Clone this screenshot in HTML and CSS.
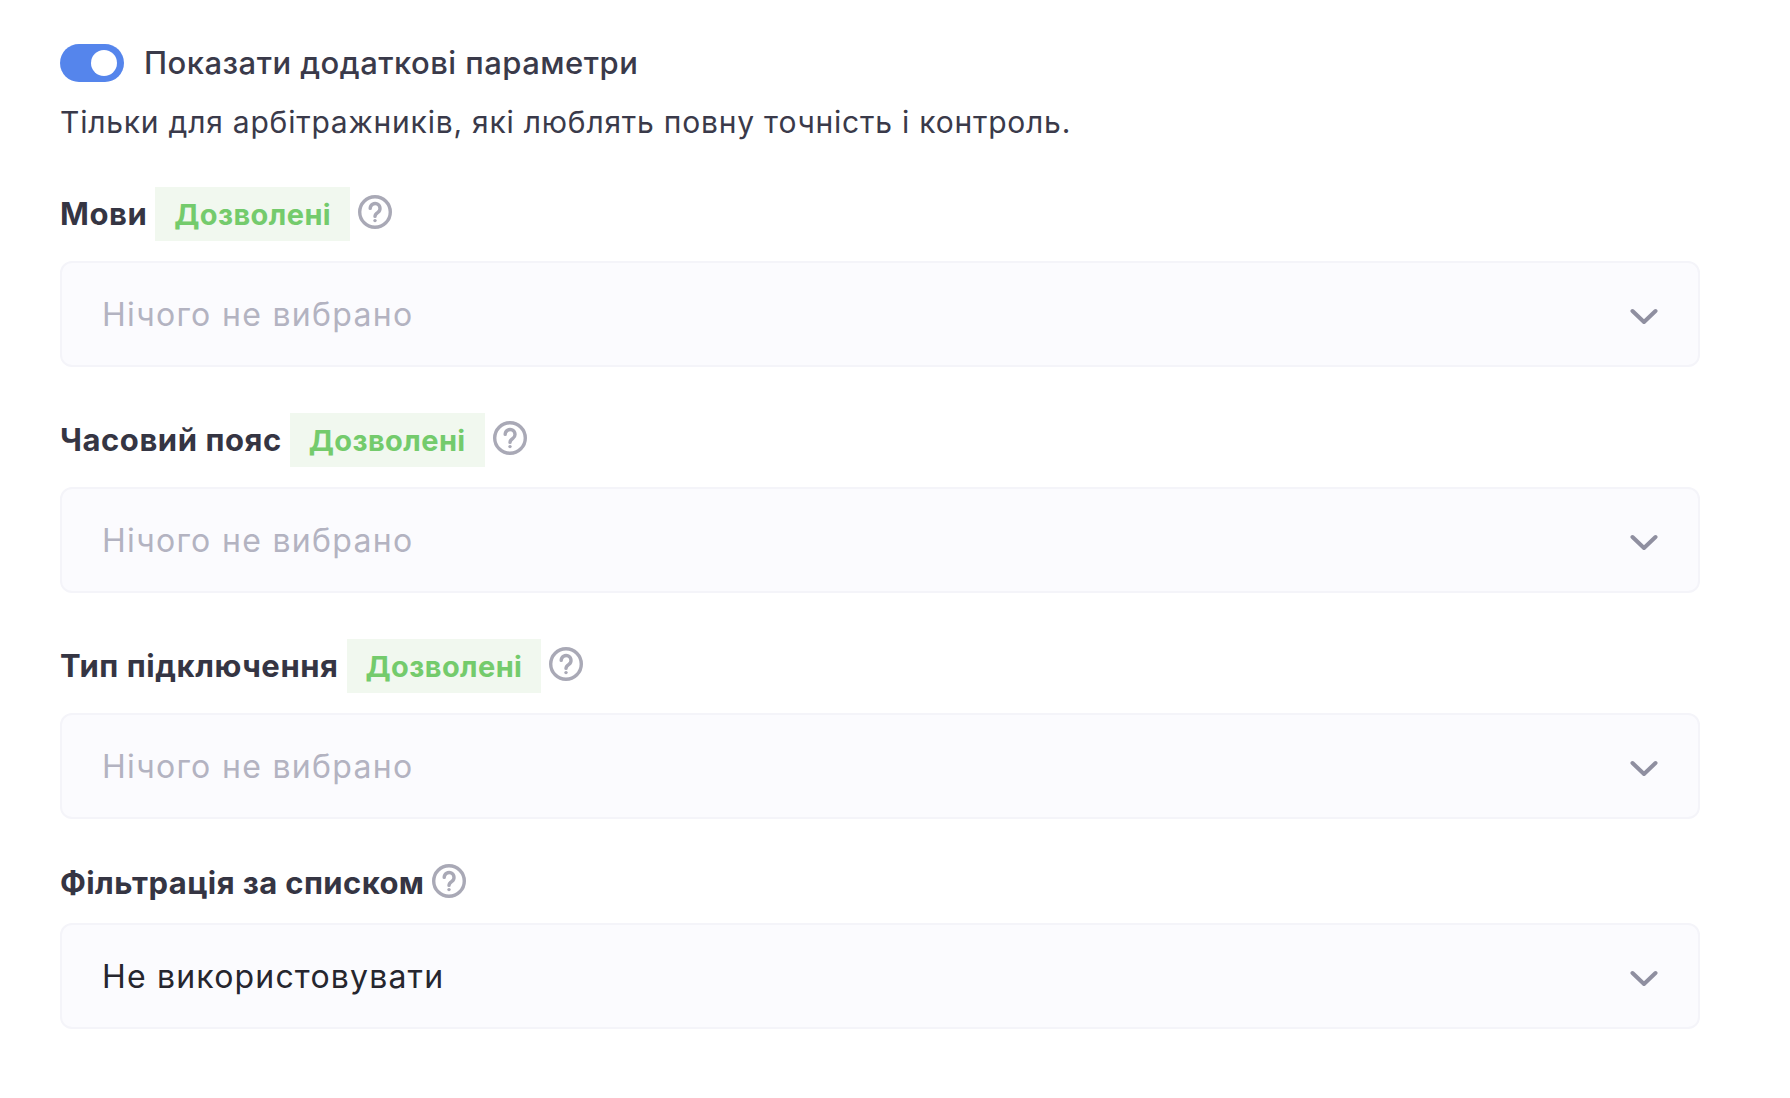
FILE: index.html
```html
<!DOCTYPE html>
<html lang="uk">
<head>
<meta charset="utf-8">
<title>Додаткові параметри</title>
<link rel="stylesheet" href="styles.css">
</head>
<body>
<main class="page">
  <div class="toggle-row">
    <span class="toggle"><span class="knob"></span></span>
    <span class="toggle-label">Показати додаткові параметри</span>
  </div>
  <p class="hint">Тільки для арбітражників, які люблять повну точність і контроль.</p>

  <section class="field">
    <div class="label-row">
      <span class="label">Мови</span>
      <span class="badge">Дозволені</span>
      <svg class="help" viewBox="0 0 34 34"><circle cx="17" cy="17" r="15.3"/><path d="M12.2 13.4a4.9 4.9 0 1 1 7.7 4c-1.9 1.3-2.9 2-2.9 4"/><circle class="dot" cx="17" cy="25.6" r="1.7"/></svg>
    </div>
    <div class="select"><span class="placeholder">Нічого не вибрано</span><svg class="chev" viewBox="0 0 28 18"><path d="M2.5 3 14 14 25.5 3"/></svg></div>
  </section>

  <section class="field">
    <div class="label-row">
      <span class="label">Часовий пояс</span>
      <span class="badge">Дозволені</span>
      <svg class="help" viewBox="0 0 34 34"><circle cx="17" cy="17" r="15.3"/><path d="M12.2 13.4a4.9 4.9 0 1 1 7.7 4c-1.9 1.3-2.9 2-2.9 4"/><circle class="dot" cx="17" cy="25.6" r="1.7"/></svg>
    </div>
    <div class="select"><span class="placeholder">Нічого не вибрано</span><svg class="chev" viewBox="0 0 28 18"><path d="M2.5 3 14 14 25.5 3"/></svg></div>
  </section>

  <section class="field">
    <div class="label-row">
      <span class="label">Тип підключення</span>
      <span class="badge">Дозволені</span>
      <svg class="help" viewBox="0 0 34 34"><circle cx="17" cy="17" r="15.3"/><path d="M12.2 13.4a4.9 4.9 0 1 1 7.7 4c-1.9 1.3-2.9 2-2.9 4"/><circle class="dot" cx="17" cy="25.6" r="1.7"/></svg>
    </div>
    <div class="select"><span class="placeholder">Нічого не вибрано</span><svg class="chev" viewBox="0 0 28 18"><path d="M2.5 3 14 14 25.5 3"/></svg></div>
  </section>

  <section class="field field-plain">
    <div class="label-row">
      <span class="label">Фільтрація за списком</span>
      <svg class="help" viewBox="0 0 34 34"><circle cx="17" cy="17" r="15.3"/><path d="M12.2 13.4a4.9 4.9 0 1 1 7.7 4c-1.9 1.3-2.9 2-2.9 4"/><circle class="dot" cx="17" cy="25.6" r="1.7"/></svg>
    </div>
    <div class="select"><span class="value">Не використовувати</span><svg class="chev" viewBox="0 0 28 18"><path d="M2.5 3 14 14 25.5 3"/></svg></div>
  </section>
</main>
</body>
</html>
```
FILE: styles.css
```css
* { box-sizing: border-box; }
html, body { margin: 0; background: #fff; }
body {
  width: 1790px;
  height: 1098px;
  overflow: hidden;
  font-family: Inter, "Noto Sans", sans-serif;
  color: #3a3a4a;
}
.page { padding: 44px 90px 0 60px; }
.toggle-row { display: flex; align-items: center; gap: 20px; height: 38px; }
.toggle {
  display: flex; align-items: center; justify-content: flex-end;
  width: 64px; height: 38px; padding-right: 7px;
  background: #5585ec; border-radius: 19px;
}
.knob { width: 26px; height: 26px; border-radius: 50%; background: #fff; }
.toggle-label { font-size: 31px; font-weight: 500; line-height: 36px; letter-spacing: .47px; white-space: nowrap; }
.hint { margin: 21px 0 0; font-size: 30px; line-height: 38px; letter-spacing: .78px; white-space: nowrap; }
.field { margin-top: 46px; }
.field-plain { margin-top: 45px; }
.label-row { display: flex; align-items: center; gap: 8px; min-height: 54px; margin-bottom: 20px; }
.field-plain .label-row { min-height: 38px; margin-bottom: 21px; }
.label { font-size: 31px; font-weight: 700; line-height: 38px; letter-spacing: .55px; color: #353543; white-space: nowrap; }
.field-plain .label { letter-spacing: .39px; }
.badge {
  display: flex; align-items: center; height: 54px; padding: 0 19px;
  background: #f1f8ef; color: #74cb6c;
  font-size: 29px; font-weight: 700; letter-spacing: .4px; white-space: nowrap;
}
.help { flex: none; width: 34px; height: 34px; fill: none; stroke: #a9a9b6; stroke-width: 3.4; stroke-linecap: round; margin-top: -4px; }
.help .dot { fill: #a9a9b6; stroke: none; }
.select {
  display: flex; align-items: center; justify-content: space-between;
  height: 106px; padding: 0 40px;
  background: #fbfbfe; border: 2px solid #f4f4f9; border-radius: 12px;
  font-size: 32px; letter-spacing: 1.3px;
}
.placeholder { color: #b3b3c1; }
.value { color: #26262e; letter-spacing: 1.18px; }
.chev { width: 28px; height: 18px; fill: none; stroke: #8f8fa0; stroke-width: 4; stroke-linecap: round; stroke-linejoin: round; margin-top: 5px; }
```
